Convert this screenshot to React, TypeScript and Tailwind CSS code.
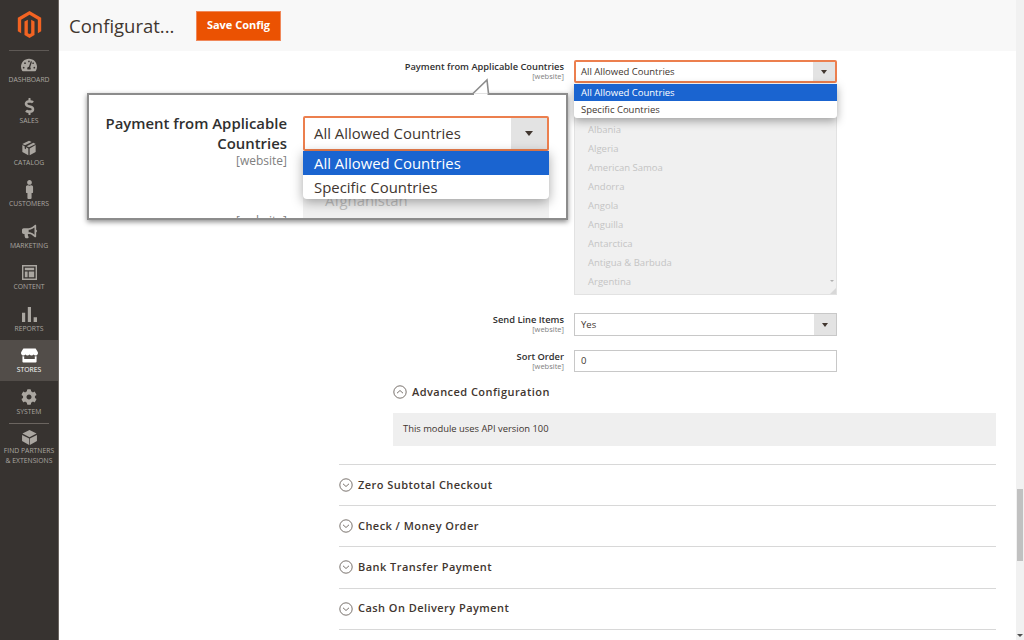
import type { ReactNode } from 'react';
import { FaTachometerAlt, FaDollarSign, FaMale, FaBullhorn, FaStore, FaCog } from 'react-icons/fa';

const navItems: { label: ReactNode; icon: ReactNode; active?: boolean; divider?: boolean }[] = [
  { label: 'DASHBOARD', icon: <FaTachometerAlt className="h-[16px] w-[16px]" /> },
  { label: 'SALES', icon: <FaDollarSign className="h-[17px] w-[17px]" /> },
  {
    label: 'CATALOG',
    icon: (
      <svg viewBox="0 0 24 24" className="h-[16px] w-[16px]" fill="currentColor">
        <path d="M12 1 2 6l4 2 10-5zM18.500 4.200 8.500 9.300 12 11l10-5zM2 7.600V18l9 5V12.600l-3.500-1.800v3l-2-1V9.400zM13 12.600V23l9-5V7.600z" />
      </svg>
    ),
  },
  { label: 'CUSTOMERS', icon: <FaMale className="h-[19px] w-[19px]" /> },
  { label: 'MARKETING', icon: <FaBullhorn className="h-[15px] w-[15px]" /> },
  {
    label: 'CONTENT',
    icon: (
      <svg viewBox="0 0 16 16" className="h-[15px] w-[15px]" fill="currentColor">
        <path fillRule="evenodd" d="M0 0h16v16H0zM1.500 1.500v13h13v-13zM3 3h10v2.500H3zM3 7h3v6H3zM7.200 7H13v6H7.200z" />
      </svg>
    ),
  },
  {
    label: 'REPORTS',
    icon: (
      <svg viewBox="0 0 16 16" className="h-[15px] w-[15px]" fill="currentColor">
        <path d="M0 6h3.400v10H0zM6.200 0h3.400v16H6.200zM12.400 11H16v5h-3.600z" />
      </svg>
    ),
  },
  { label: 'STORES', icon: <FaStore className="h-[15px] w-[17px]" />, active: true },
  { label: 'SYSTEM', icon: <FaCog className="h-[16px] w-[16px]" />, divider: true },
  {
    label: (
      <>
        FIND PARTNERS
        <br />& EXTENSIONS
      </>
    ),
    icon: (
      <svg viewBox="0 0 24 24" className="h-[17px] w-[17px]" fill="currentColor">
        <path d="M12 1.500 2 6.500l10 5 10-5zM1.500 8.500V17l10 5.500V13.500zM22.500 8.500V17l-10 5.500V13.500z" />
      </svg>
    ),
  },
];

const countries = [
  'Afghanistan',
  'Albania',
  'Algeria',
  'American Samoa',
  'Andorra',
  'Angola',
  'Anguilla',
  'Antarctica',
  'Antigua & Barbuda',
  'Argentina',
];

const sections = [
  'Zero Subtotal Checkout',
  'Check / Money Order',
  'Bank Transfer Payment',
  'Cash On Delivery Payment',
];

function Caret() {
  return <span className="h-0 w-0 border-x-[3.500px] border-t-[4px] border-x-transparent border-t-[#41362f]" />;
}

function Chevron({ up }: { up?: boolean }) {
  return (
    <svg viewBox="0 0 14 14" className="h-[14px] w-[14px] text-[#41362f]" fill="none" stroke="currentColor" strokeWidth="0.7">
      <circle cx="7" cy="7" r="6.200" />
      <path d={up ? 'M4 8.200 7 5.500l3 2.700' : 'M4 5.800 7 8.500l3-2.700'} />
    </svg>
  );
}

function FormRow({ label, children, className }: { label: string; children: ReactNode; className?: string }) {
  return (
    <div className={`flex ${className ?? ''}`}>
      <div className="w-[505px] shrink-0 pt-[1px] text-right">
        <div className="text-[9.300px] leading-[11px] font-semibold text-[#303030]">{label}</div>
        <div className="text-[7.500px] leading-[9px] text-[#808080]">[website]</div>
      </div>
      <div className="ml-[10px] w-[263px]">{children}</div>
    </div>
  );
}

export default function App() {
  return (
    <div className="relative flex h-[640px] w-[1024px] overflow-hidden bg-white font-['Open_Sans',sans-serif]">
      <aside className="flex w-[59px] shrink-0 flex-col items-center border-r border-[#6b6560] bg-[#373330] text-[#aaa6a0]">
        <div className="flex h-[50px] w-full shrink-0 justify-center pt-[11px]">
          <svg viewBox="0 0 24 24" className="h-[27px] w-[27px] text-[#f26322]" fill="currentColor">
            <path d="M12 24l-4.455-2.572v-12l2.970-1.715v12.001L12 20.430l1.485-.716V7.714l2.970 1.715v12L12 24zM22.391 6v12l-2.969 1.714V7.714L12 3.430 4.574 7.714v12.001L1.609 18V6L12 0l10.391 6z" />
          </svg>
        </div>
        <div className="h-px w-10 shrink-0 bg-[#5e5955]" />
        <nav className="-mt-[2px] w-full">
          {navItems.map((item, i) => (
            <div key={i}>
              <div
                className={`flex h-[41.500px] w-full flex-col items-center pt-[6.500px] ${item.active ? 'bg-[#524d49] text-white' : ''}`}
              >
                <div className="flex h-[19px] items-center justify-center">{item.icon}</div>
                <div className="text-center text-[6.800px] leading-[9.500px] whitespace-nowrap">{item.label}</div>
              </div>
              {item.divider && <div className="mx-auto -mb-[1px] h-px w-10 bg-[#6b6560]" />}
            </div>
          ))}
        </nav>
      </aside>

      <div className="flex min-w-0 flex-1 flex-col">
        <header className="flex h-[51px] shrink-0 items-center bg-[#f8f8f8] pl-[10px]">
          <h1 className="w-[106px] shrink-0 text-[18.500px] font-normal whitespace-nowrap text-[#41362f]">Configurat...</h1>
          <button className="ml-[21px] h-[30px] w-[85px] border border-[#f0885a] bg-[#eb5202] text-[11px] font-bold text-white">
            Save Config
          </button>
        </header>

        <main className="pt-[9px]">
          <FormRow label="Payment from Applicable Countries">
            <div className="relative">
              <div className="flex h-[23px] items-stretch rounded-[2px] border-2 border-[#ec7f4e] bg-white">
                <div className="flex-1 pl-[5px] text-[9.500px] leading-[19px] text-[#41362f]">All Allowed Countries</div>
                <div className="flex w-[22px] items-center justify-center bg-[#e3e3e3]">
                  <Caret />
                </div>
              </div>
              <div className="absolute top-[23.500px] z-10 w-full overflow-hidden rounded-b-[3px] bg-white text-[9.500px] leading-[17px] text-[#41362f] shadow-[0_3px_10px_rgba(0,0,0,0.35)]">
                <div className="bg-[#1a64d0] pl-[7px] text-white">All Allowed Countries</div>
                <div className="pl-[7px]">Specific Countries</div>
              </div>
              <div className="relative mt-[10px] h-[202px] overflow-hidden border border-[#e2e2e2] bg-[#f0f0f0] pt-[7px] pl-[13px] text-[9.500px] leading-[19px] text-[#c4c4c4]">
                {countries.map((c) => (
                  <div key={c}>{c}</div>
                ))}
                {/* scroll arrow and resize handle of the list */}
                <span className="absolute right-[2px] bottom-[12px] h-0 w-0 border-x-[2px] border-t-[2px] border-x-transparent border-t-[#b0b0b0]" />
                <span className="absolute right-0 bottom-0 h-0 w-0 border-b-[6px] border-l-[6px] border-b-[#d8d8d8] border-l-transparent" />
              </div>
            </div>
          </FormRow>

          <FormRow label="Send Line Items" className="mt-[18px]">
            <div className="flex h-[23px] items-stretch border border-[#c8c8c8] bg-white">
              <div className="flex-1 pl-[6px] text-[9.500px] leading-[21px] text-[#41362f]">Yes</div>
              <div className="flex w-[22px] items-center justify-center bg-[#e3e3e3]">
                <Caret />
              </div>
            </div>
          </FormRow>

          <FormRow label="Sort Order" className="mt-[14px]">
            <div className="h-[22px] border border-[#c8c8c8] bg-white pl-[6px] text-[9.500px] leading-[20px] text-[#41362f]">0</div>
          </FormRow>

          <div className="mt-[11px] ml-[334px] mr-[20px]">
            <div className="flex h-[18px] items-center gap-[5px] text-[11px] font-semibold tracking-[0.45px] text-[#41362f]">
              <Chevron up />
              Advanced Configuration
            </div>
            <div className="mt-[12px] h-[33px] bg-[#efefef] pl-[10px] text-[9.400px] leading-[32px] text-[#41362f]">
              This module uses API version 100
            </div>
          </div>

          <div className="mt-[18px] ml-[280px] mr-[20px]">
            {sections.map((s) => (
              <div
                key={s}
                className="flex h-[41.200px] items-center gap-[5px] border-t border-[#d8d8d8] text-[11px] font-semibold tracking-[0.45px] text-[#41362f]"
              >
                <Chevron />
                {s}
              </div>
            ))}
            <div className="border-t border-[#d8d8d8]" />
          </div>
        </main>
      </div>

      {/* browser scrollbar */}
      <div className="flex w-2 shrink-0 flex-col items-center bg-[#f1f1f1]">
        <div className="mt-[489px] h-[72px] w-[6px] bg-[#c1c1c1]" />
        <div className="mt-auto mb-[3px] h-0 w-0 border-x-[3px] border-t-[3px] border-x-transparent border-t-[#505050]" />
      </div>

      {/* zoomed callout over the form */}
      <div className="absolute top-[93px] left-[87px] z-20 h-[127px] w-[481px] border-2 border-[#8c8c8c] bg-white shadow-[0_2px_5px_rgba(0,0,0,0.45)]">
        <div className="flex h-full overflow-hidden pt-[18px]">
          <div className="w-[198px] shrink-0 text-right">
            <div className="text-[14.900px] leading-[20px] font-semibold text-[#303030]">
              Payment from Applicable Countries
            </div>
            <div className="text-[12px] leading-[16px] text-[#808080]">[website]</div>
            <div className="mt-[44px] text-[12px] leading-[16px] text-[#808080]">[website]</div>
          </div>
          <div className="relative mt-[3px] ml-[16px] w-[246px] shrink-0">
            <div className="flex h-[35px] items-stretch rounded-[2px] border-2 border-[#ec7f4e] bg-white">
              <div className="flex-1 pl-[9px] text-[14.900px] leading-[30px] text-[#41362f]">All Allowed Countries</div>
              <div className="flex w-[36px] items-center justify-center bg-[#e3e3e3]">
                <span className="h-0 w-0 border-x-[4.500px] border-t-[5px] border-x-transparent border-t-[#41362f]" />
              </div>
            </div>
            <div className="absolute top-[35px] z-10 w-full overflow-hidden rounded-b-[4px] bg-white text-[14.900px] leading-[24px] text-[#41362f] shadow-[0_3px_12px_rgba(0,0,0,0.35)]">
              <div className="bg-[#1a64d0] pl-[11px] text-white">All Allowed Countries</div>
              <div className="pl-[11px]">Specific Countries</div>
            </div>
            <div className="mt-[14px] h-[80px] overflow-hidden bg-[#f0f0f0] pt-[23px] pl-[22px] text-[14.900px] leading-[24px] text-[#c0c0c0]">
              Afghanistan
            </div>
          </div>
        </div>
      </div>
      <svg viewBox="0 0 18 16" className="absolute top-[78px] left-[472px] z-30 h-[17px] w-[18px]" fill="white" stroke="#8c8c8c" strokeWidth="1.600">
        <path d="M1 15 15 1.500 16.500 15" />
        <path d="M2 17h13.500V15H2z" stroke="none" />
      </svg>
    </div>
  );
}
